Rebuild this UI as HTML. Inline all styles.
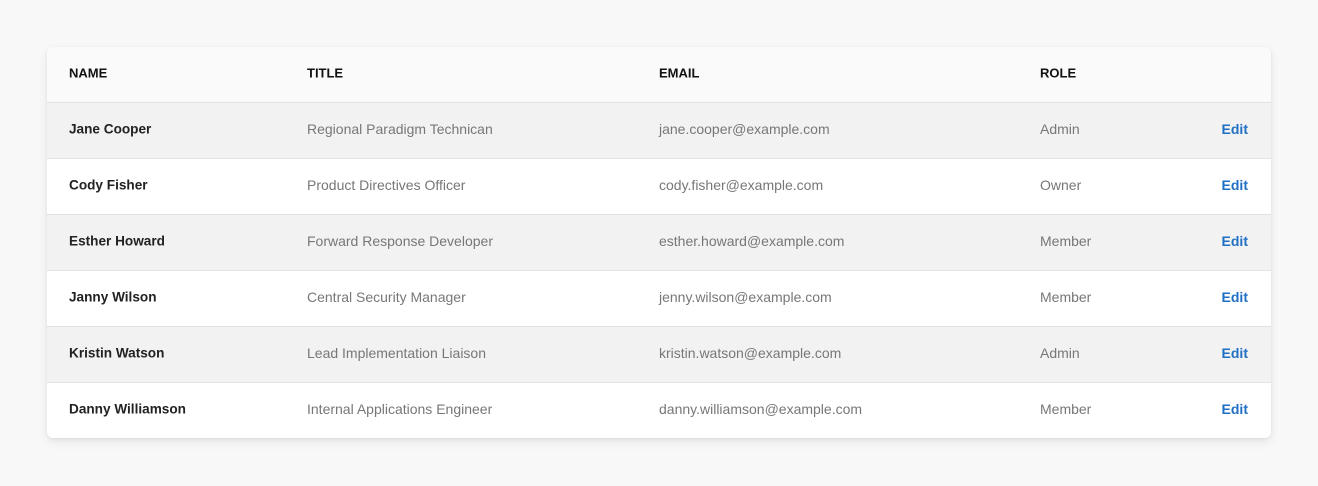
<!DOCTYPE html>
<html><head><style>
body{margin:0;background:#f8f8f8;font-family:"Liberation Sans",Arial,sans-serif;width:1318px;height:486px;overflow:hidden}
.t{position:absolute;left:47px;top:47px;width:1224px;border-radius:6px;overflow:hidden;background:#fff;box-shadow:0 4px 10px rgba(0,0,0,0.08),0 1px 3px rgba(0,0,0,0.06)}
.r{position:relative;height:56px;border-top:1px solid #e2e2e2;box-sizing:border-box;font-size:14px}
.h{height:55px;border-top:none;background:#fafafa;font-size:13px;font-weight:bold;color:#111}
.g{background:#f2f2f2}
.r span{position:absolute;top:50%;transform:translateY(-50%);margin-top:-2px;white-space:nowrap}
.c1{left:22px;font-weight:bold;color:#222;font-size:13.6px}
.c2{left:260px;color:#777}
.c3{left:612px;color:#777}
.c4{left:993px;color:#777}
.c5{right:23px;color:#1f6fc5;font-weight:bold}
.h span{color:#111;font-size:13px}
</style></head><body>
<div class="t">
<div class="r h"><span class="c1">NAME</span><span class="c2">TITLE</span><span class="c3">EMAIL</span><span class="c4">ROLE</span></div>
<div class="r g"><span class="c1">Jane Cooper</span><span class="c2">Regional Paradigm Technican</span><span class="c3">jane.cooper@example.com</span><span class="c4">Admin</span><span class="c5">Edit</span></div>
<div class="r"><span class="c1">Cody Fisher</span><span class="c2">Product Directives Officer</span><span class="c3">cody.fisher@example.com</span><span class="c4">Owner</span><span class="c5">Edit</span></div>
<div class="r g"><span class="c1">Esther Howard</span><span class="c2">Forward Response Developer</span><span class="c3">esther.howard@example.com</span><span class="c4">Member</span><span class="c5">Edit</span></div>
<div class="r"><span class="c1">Janny Wilson</span><span class="c2">Central Security Manager</span><span class="c3">jenny.wilson@example.com</span><span class="c4">Member</span><span class="c5">Edit</span></div>
<div class="r g"><span class="c1">Kristin Watson</span><span class="c2">Lead Implementation Liaison</span><span class="c3">kristin.watson@example.com</span><span class="c4">Admin</span><span class="c5">Edit</span></div>
<div class="r"><span class="c1">Danny Williamson</span><span class="c2">Internal Applications Engineer</span><span class="c3">danny.williamson@example.com</span><span class="c4">Member</span><span class="c5">Edit</span></div>
</div>
</body></html>
